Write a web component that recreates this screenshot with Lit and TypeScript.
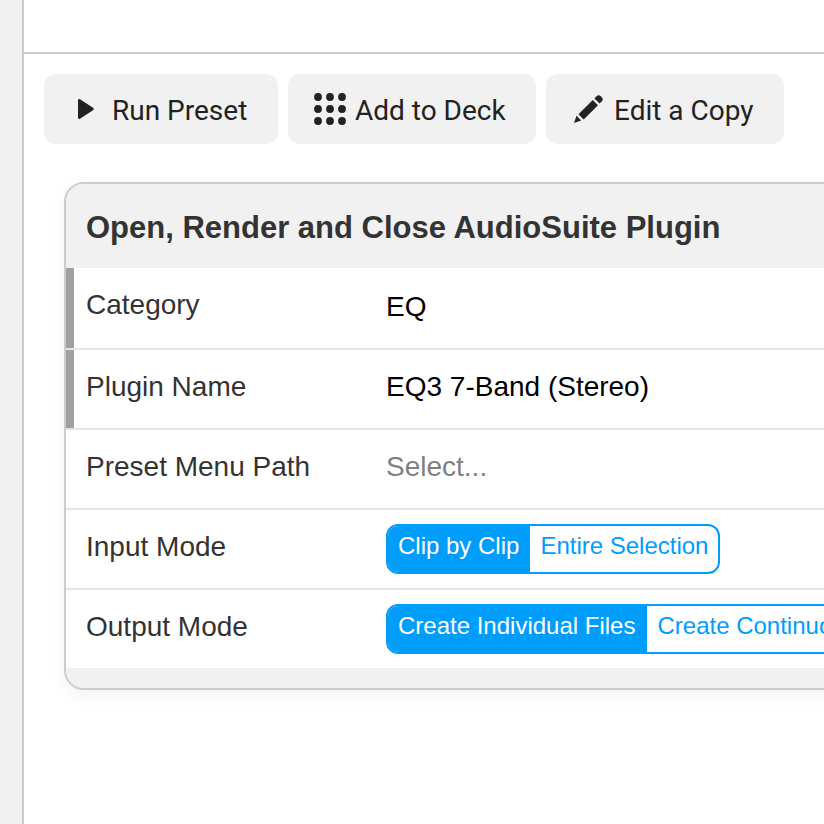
import { LitElement, html, css } from "lit";
import { customElement } from "lit/decorators.js";

@customElement("app-root")
export class AppRoot extends LitElement {
  static styles = css`
    :host { display: flex; width: 824px; height: 824px; overflow: hidden; background: #fff; font-family: "Liberation Sans", Arial, sans-serif; color: #333; }
    .side { flex: none; width: 22px; background: #f1f1f1; border-right: 2px solid #ccc; }
    .main { flex: 1; min-width: 0; display: flex; flex-direction: column; }
    .top { flex: none; height: 52px; border-bottom: 2px solid #ccc; }
    .tools { display: flex; gap: 10px; padding: 20px 20px 0; }
    .btn { flex: none; height: 70px; display: flex; align-items: center; background: #f1f1f1; border-radius: 12px; font: 28px Roboto, sans-serif; color: #222; box-sizing: border-box; }
    .btn span { padding-top: 2px; }
    .run { width: 234px; padding-left: 34px; gap: 18px; }
    .add { width: 248px; padding-left: 26px; gap: 9px; }
    .edit { width: 238px; padding-left: 27px; gap: 11px; }
    .card { flex: none; width: 1000px; margin: 38px 0 0 40px; border: 2px solid #ccc; border-radius: 20px; overflow: hidden; box-shadow: 0 6px 20px rgba(0,0,0,.05); box-sizing: border-box; }
    .head { height: 84px; display: flex; align-items: center; padding: 3px 0 0 20px; box-sizing: border-box; background: #f1f1f1; font-size: 31px; font-weight: 700; }
    .row { height: 80px; box-sizing: border-box; display: flex; align-items: center; border-bottom: 2px solid #e5e5e5; font-size: 28px; }
    .row.last { border-bottom: 0; height: 78px; }
    .row.first { height: 82px; }
    .row.req { box-shadow: inset 8px 0 0 #a0a0a0; }
    .label { flex: none; width: 320px; padding: 0 0 4px 20px; box-sizing: border-box; }
    .first .label { padding-bottom: 6px; }
    .val { color: #000; padding-bottom: 4px; }
    .first .val { padding-bottom: 2px; }
    .ph { color: #808080; padding-bottom: 4px; }
    .seg { display: flex; height: 50px; box-sizing: border-box; border: 2px solid #009dfb; border-radius: 12px; overflow: hidden; font-size: 24px; color: #009dfb; }
    .seg span { display: flex; align-items: center; padding: 0 11px 6px 10px; white-space: nowrap; }
    .seg span:last-child { padding-right: 10px; }
    .seg .on { background: #009dfb; color: #fff; }
    .seg .wide { padding-right: 12px; }
    .foot { height: 20px; background: #f1f1f1; }
    svg { display: block; flex: none; fill: #222; }
  `;

  render() {
    return html`
      <div class="side"></div>
      <div class="main">
        <div class="top"></div>
        <div class="tools">
          <div class="btn run">
            <svg width="16" height="20" viewBox="0 0 16 20"><path d="M0 1.500C0 .3 1 -.3 2 .3L15 8.700c1 .6 1 2 0 2.600L2 19.700c-1 .6-2 0-2-1.200z"/></svg>
            <span>Run Preset</span>
          </div>
          <div class="btn add">
            <svg width="32" height="32" viewBox="0 0 32 32">
              <circle cx="4" cy="4" r="3.900"/><circle cx="16" cy="4" r="3.900"/><circle cx="28" cy="4" r="3.900"/>
              <circle cx="4" cy="16" r="3.900"/><circle cx="16" cy="16" r="3.900"/><circle cx="28" cy="16" r="3.900"/>
              <circle cx="4" cy="28" r="3.900"/><circle cx="16" cy="28" r="3.900"/><circle cx="28" cy="28" r="3.900"/>
            </svg>
            <span>Add to Deck</span>
          </div>
          <div class="btn edit">
            <svg width="30" height="30" viewBox="0 0 30 30">
              <path d="M1 29l2.500-7.200 4.700 4.700z"/>
              <path d="M5.500 20.300L19.800 6l5.200 5.200-14.300 14.300z"/>
              <path d="M21.400 4.400l2.100-2.100a3 3 0 0 1 4.300 0l.9.900a3 3 0 0 1 0 4.300l-2.100 2.100z"/>
            </svg>
            <span>Edit a Copy</span>
          </div>
        </div>
        <div class="card">
          <div class="head">Open, Render and Close AudioSuite Plugin</div>
          <div class="row first req"><div class="label">Category</div><div class="val">EQ</div></div>
          <div class="row req"><div class="label">Plugin Name</div><div class="val">EQ3 7-Band (Stereo)</div></div>
          <div class="row"><div class="label">Preset Menu Path</div><div class="ph">Select...</div></div>
          <div class="row"><div class="label">Input Mode</div><div class="seg"><span class="on">Clip by Clip</span><span>Entire Selection</span></div></div>
          <div class="row last"><div class="label">Output Mode</div><div class="seg"><span class="on wide">Create Individual Files</span><span>Create Continuous File</span></div></div>
          <div class="foot"></div>
        </div>
      </div>
    `;
  }
}
